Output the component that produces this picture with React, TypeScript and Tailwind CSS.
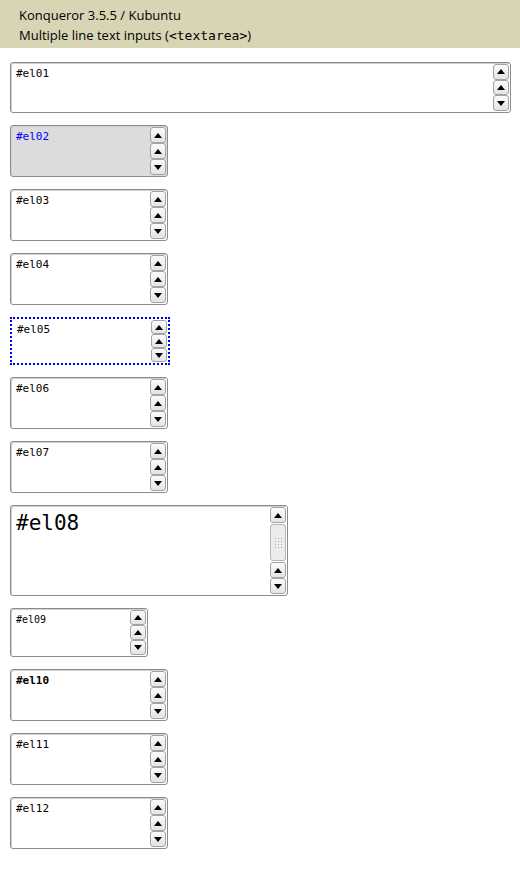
import React from "react";

function Arrow({ up }: { up: boolean }) {
  return (
    <svg width="8" height="5" viewBox="0 0 8 5">
      {up ? <polygon points="0,5 8,5 4,0" fill="#000" /> : <polygon points="0,0 8,0 4,5" fill="#000" />}
    </svg>
  );
}

function Btn({ up, h }: { up: boolean; h: string }) {
  return (
    <div
      className={`${h} w-[16px] flex items-center justify-center rounded-[3px] border border-[#a3a3a3] bg-gradient-to-b from-[#fbfbfb] to-[#e4e4e4]`}
    >
      <Arrow up={up} />
    </div>
  );
}

type Props = {
  id: string;
  w: string;
  h: string;
  text?: string;
  big?: boolean;
  focused?: boolean;
  disabled?: boolean;
};

function Area({ id, w, h, text = "text-[11px]", big, focused, disabled }: Props) {
  const frame = focused
    ? "border-2 border-dotted border-[#0000ee]"
    : "border border-[#8c8c8c] rounded-[3px] shadow-[inset_1px_1px_0_#d0d0d0]";
  const bh = focused ? "h-[15px]" : "h-[16px]";
  return (
    <div className={`${w} ${h} ${frame} flex ${disabled ? "bg-[#dcdcdc]" : "bg-white"}`}>
      <div
        className={`flex-1 pl-[5px] pt-[4px] leading-[1.3] ${text} ${
          disabled ? "text-[#0000ff]" : "text-black"
        }`}
        style={{ fontFamily: '"DejaVu Sans Mono", monospace' }}
      >
        {id}
      </div>
      <div className="flex flex-col py-[1px] pr-[1px]">
        {big ? (
          <>
            <Btn up h="h-[16px]" />
            <div className="flex-1 my-[1px] w-[16px] rounded-[3px] border border-[#b5b5b5] bg-[#ececec] flex items-center justify-center">
              <div className="grid grid-cols-3 gap-[2px]">
                {Array.from({ length: 12 }).map((_, i) => (
                  <div key={i} className="w-[1px] h-[1px] bg-[#a8a8a8]" />
                ))}
              </div>
            </div>
            <Btn up h="h-[16px]" />
            <Btn up={false} h="h-[16px]" />
          </>
        ) : (
          <>
            <Btn up h={bh} />
            <Btn up h={bh} />
            <Btn up={false} h={bh} />
          </>
        )}
      </div>
    </div>
  );
}

export default function App() {
  return (
    <div className="w-[520px] min-h-[869px] bg-white">
      <div
        className="h-[48px] bg-[#d8d5b5] pl-[19px] pt-[5px] text-[13px] leading-[20px] text-black font-medium"
        style={{ fontFamily: '"Open Sans", sans-serif' }}
      >
        <div>Konqueror 3.5.5 / Kubuntu</div>
        <div>
          Multiple line text inputs (
          <span className="font-normal" style={{ fontFamily: '"DejaVu Sans Mono", monospace' }}>
            &lt;textarea&gt;
          </span>
          )
        </div>
      </div>
      <div className="flex flex-col gap-[12px] pl-[10px] pt-[14px] pb-[20px]">
        <Area id="#el01" w="w-[501px]" h="h-[51px]" />
        <Area id="#el02" w="w-[158px]" h="h-[52px]" disabled />
        <Area id="#el03" w="w-[158px]" h="h-[52px]" />
        <Area id="#el04" w="w-[158px]" h="h-[52px]" />
        <Area id="#el05" w="w-[160px]" h="h-[48px]" focused />
        <Area id="#el06" w="w-[158px]" h="h-[52px]" />
        <Area id="#el07" w="w-[158px]" h="h-[52px]" />
        <Area id="#el08" w="w-[278px]" h="h-[91px]" text="text-[21px]" big />
        <Area id="#el09" w="w-[138px]" h="h-[49px]" text="text-[10px]" />
        <Area id="#el10" w="w-[158px]" h="h-[52px]" text="text-[11px] font-bold" />
        <Area id="#el11" w="w-[158px]" h="h-[52px]" />
        <Area id="#el12" w="w-[158px]" h="h-[52px]" />
      </div>
    </div>
  );
}
